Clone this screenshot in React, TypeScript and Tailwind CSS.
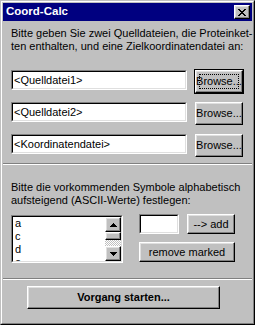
import * as React from "react";

const raised =
  "border border-t-white border-l-white border-r-black border-b-black shadow-[inset_-1px_-1px_#808080,inset_1px_1px_#dfdfdf] bg-[#c0c0c0]";

function Sunken({ className, children }: { className: string; children?: React.ReactNode }) {
  return (
    <div className={"border border-t-[#808080] border-l-[#808080] border-r-white border-b-white " + className}>
      <div className="h-full border border-t-black border-l-black border-r-[#dfdfdf] border-b-[#dfdfdf] bg-white flex">
        {children}
      </div>
    </div>
  );
}

function CloseGlyph() {
  const cells: [number, number, number][] = [
    [0, 0, 2], [6, 0, 2],
    [1, 1, 2], [5, 1, 2],
    [2, 2, 4],
    [3, 3, 2],
    [2, 4, 4],
    [1, 5, 2], [5, 5, 2],
    [0, 6, 2], [6, 6, 2],
  ];
  return (
    <svg width="8" height="7" viewBox="0 0 8 7" shapeRendering="crispEdges">
      {cells.map(([x, y, w], i) => (
        <rect key={i} x={x} y={y} width={w} height={1} fill="#000" />
      ))}
    </svg>
  );
}

function Arrow({ down }: { down?: boolean }) {
  return (
    <svg width="7" height="4" viewBox="0 0 7 4" shapeRendering="crispEdges">
      {down ? (
        <>
          <rect x="0" y="0" width="7" height="1" fill="#000" />
          <rect x="1" y="1" width="5" height="1" fill="#000" />
          <rect x="2" y="2" width="3" height="1" fill="#000" />
          <rect x="3" y="3" width="1" height="1" fill="#000" />
        </>
      ) : (
        <>
          <rect x="3" y="0" width="1" height="1" fill="#000" />
          <rect x="2" y="1" width="3" height="1" fill="#000" />
          <rect x="1" y="2" width="5" height="1" fill="#000" />
          <rect x="0" y="3" width="7" height="1" fill="#000" />
        </>
      )}
    </svg>
  );
}

function FileRow({ value, focused }: { value: string; focused?: boolean }) {
  return (
    <div className="flex gap-[8px] h-[23px]">
      <Sunken className="w-[176px] h-[20px]">
        <span className="pl-px leading-[16px] whitespace-nowrap">{value}</span>
      </Sunken>
      <button
        className={
          raised +
          " relative w-[48px] h-[23px] flex items-center justify-center leading-none " +
          (focused ? "outline outline-black" : "")
        }
      >
        Browse...
        {focused && <span className="absolute inset-[3px] border border-dotted border-black" />}
      </button>
    </div>
  );
}

function Separator({ className }: { className: string }) {
  return <div className={"h-[2px] border-t border-t-[#808080] border-b border-b-white " + className} />;
}

export default function App(): React.ReactElement {
  return (
    <div className="w-[255px] h-[325px] bg-[#c0c0c0] border border-t-[#c0c0c0] border-l-[#c0c0c0] border-r-black border-b-black font-['Liberation_Sans','Arial',sans-serif] text-[11px] text-black">
      <div className="h-full border border-t-white border-l-white border-r-[#808080] border-b-[#808080] p-px flex flex-col">
        <div className="h-[18px] bg-[#000080] flex items-center justify-between pl-[3px] pr-[2px]">
          <span className="text-white font-bold text-[11.5px] leading-none">Coord-Calc</span>
          <div className={raised + " w-[16px] h-[14px] flex items-center justify-center"}>
            <CloseGlyph />
          </div>
        </div>

        <div className="flex-1 flex flex-col">
          <p className="pl-[8px] pt-[6px] leading-[13px] whitespace-nowrap">
            Bitte geben Sie zwei Quelldateien, die Proteinket-
            <br />
            ten enthalten, und eine Zielkoordinatendatei an:
          </p>

          <div className="pl-[8px] mt-[17px] flex flex-col gap-[9px]">
            <FileRow value="<Quelldatei1>" focused />
            <FileRow value="<Quelldatei2>" />
            <FileRow value="<Koordinatendatei>" />
          </div>

          <Separator className="mt-[6px]" />

          <p className="pl-[8px] mt-[16px] leading-[13px] whitespace-nowrap">
            Bitte die vorkommenden Symbole alphabetisch
            <br />
            aufsteigend (ASCII-Werte) festlegen:
          </p>

          <div className="pl-[8px] mt-[7px] flex">
            <Sunken className="mt-px w-[112px] h-[48px]">
              <div className="flex-1 overflow-hidden pl-[2px] leading-[13px]">
                <div>a</div>
                <div>c</div>
                <div>d</div>
                <div>e</div>
              </div>
              <div className="w-[16px] flex flex-col">
                <div className={raised + " h-[15px] flex items-center justify-center"}>
                  <Arrow />
                </div>
                <div className={raised + " h-[8px]"} />
                <div className="flex-1 bg-[repeating-conic-gradient(#c0c0c0_0_25%,#ffffff_0_50%)] bg-[length:2px_2px]" />
                <div className={raised + " h-[15px] flex items-center justify-center"}>
                  <Arrow down />
                </div>
              </div>
            </Sunken>

            <div className="ml-[16px] w-[96px] flex flex-col gap-[8px]">
              <div className="flex gap-[8px]">
                <Sunken className="w-[40px] h-[20px]" />
                <button className={raised + " w-[48px] h-[20px] flex items-center justify-center leading-none"}>
                  --&gt; add
                </button>
              </div>
              <button className={raised + " w-[96px] h-[20px] flex items-center justify-center leading-none"}>
                remove marked
              </button>
            </div>
          </div>

          <Separator className="mt-[15px]" />

          <button
            className={
              raised +
              " mt-[6px] ml-[24px] w-[193px] h-[23px] flex items-center justify-center font-bold leading-none"
            }
          >
            Vorgang starten...
          </button>
        </div>
      </div>
    </div>
  );
}
